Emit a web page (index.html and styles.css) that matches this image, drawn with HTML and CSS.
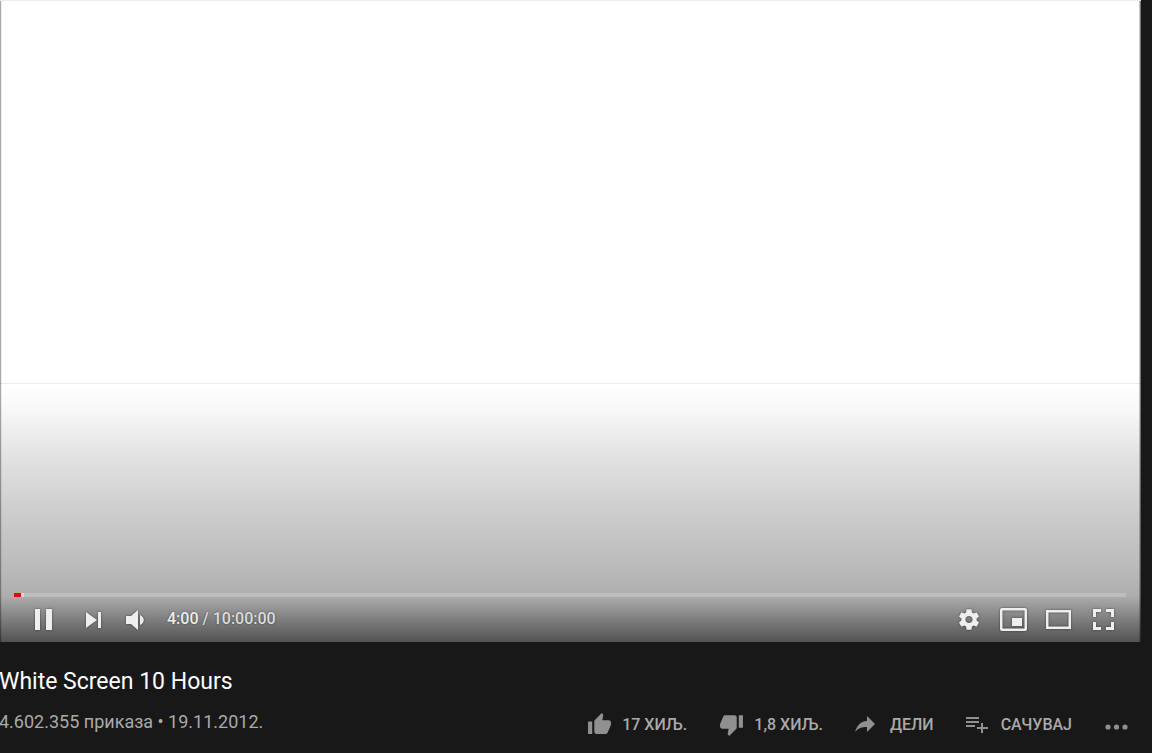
FILE: index.html
```html
<!DOCTYPE html>
<html lang="sr">
<head>
<meta charset="utf-8">
<meta name="viewport" content="width=device-width, initial-scale=1">
<title>White Screen 10 Hours</title>
<link rel="stylesheet" href="styles.css">
</head>
<body>
<main class="watch">
  <section class="player" aria-label="Видео плејер">
    <div class="chrome">
      <div class="progress" role="progressbar" aria-label="Напредак" aria-valuemin="0" aria-valuemax="36000" aria-valuenow="240">
        <span class="played"></span><span class="buffered"></span>
      </div>
      <div class="controls">
        <button class="control pause" aria-label="Паузирај"><svg width="17" height="21" viewBox="0 0 17 21"><path d="M0 0h5v21H0zM11 0h6v21h-6z"/></svg></button>
        <button class="control" aria-label="Следећи"><svg width="15" height="16" viewBox="0 0 15 16"><path d="M0 0l11 8-11 8zM12 0h3v16h-3z"/></svg></button>
        <button class="control" aria-label="Звук"><svg width="18" height="20" viewBox="0 0 18 20"><path d="M0 6h5l7-6v20l-7-6H0zM14 5c5 2 5 8 0 10z"/></svg></button>
        <div class="time"><span class="current">4:00</span> / 10:00:00</div>
        <button class="control wide" aria-label="Подешавања"><svg width="20" height="21" viewBox="2.2 2 19.6 20"><path d="M19.43 12.98c.04-.32.07-.64.07-.98s-.03-.66-.07-.98l2.11-1.65c.19-.15.24-.42.12-.64l-2-3.46c-.12-.22-.39-.3-.61-.22l-2.49 1c-.52-.4-1.08-.73-1.69-.98l-.38-2.65C14.46 2.18 14.25 2 14 2h-4c-.25 0-.46.18-.49.42l-.38 2.65c-.61.25-1.17.59-1.69.98l-2.49-1c-.23-.09-.49 0-.61.22l-2 3.46c-.13.22-.07.49.12.64l2.11 1.65c-.04.32-.07.65-.07.98s.03.66.07.98l-2.11 1.65c-.19.15-.24.42-.12.64l2 3.46c.12.22.39.3.61.22l2.49-1c.52.4 1.08.73 1.69.98l.38 2.65c.03.24.24.42.49.42h4c.25 0 .46-.18.49-.42l.38-2.65c.61-.25 1.17-.59 1.69-.98l2.49 1c.23.09.49 0 .61-.22l2-3.46c.12-.22.07-.49-.12-.64l-2.11-1.65zM12 15.5c-1.93 0-3.500-1.570-3.500-3.500s1.570-3.500 3.500-3.500 3.500 1.570 3.500 3.500-1.570 3.500-3.500 3.500z"/></svg></button>
        <button class="control wide" aria-label="Мини-плејер"><svg width="27" height="23" viewBox="0 0 27 23"><path fill-rule="evenodd" d="M2 0h23q2 0 2 2v19q0 2-2 2H2q-2 0-2-2V2Q0 0 2 0zM2.500 2.500v18h22v-18zM12 10h10v8H12z"/></svg></button>
        <button class="control wide" aria-label="Биоскопски режим"><svg width="25" height="19" viewBox="0 0 25 19"><path fill-rule="evenodd" d="M0 0h25v19H0zM2.500 2.500v14h20v-14z"/></svg></button>
        <button class="control wide" aria-label="Цео екран"><svg width="21" height="21" viewBox="0 0 21 21"><path d="M0 0h8v3H3v5H0zM13 0h8v8h-3V3h-5zM0 13h3v5h5v3H0zM18 13h3v8h-8v-3h5z"/></svg></button>
      </div>
    </div>
  </section>
  <section class="info">
    <h1 class="title">White Screen 10 Hours</h1>
    <div class="details">
      <p class="meta">4.602.355 приказа • 19.11.2012.</p>
      <div class="actions">
        <button class="action"><svg width="25" height="25" viewBox="0 0 24 24"><path d="M1 21h4V9H1v12zm22-11c0-1.100-.9-2-2-2h-6.310l.95-4.570.03-.32c0-.41-.17-.79-.44-1.060L14.170 1 7.590 7.590C7.220 7.950 7 8.450 7 9v10c0 1.100.9 2 2 2h9c.83 0 1.540-.5 1.840-1.220l3.020-7.050c.09-.23.14-.47.14-.73v-2z"/></svg>17 ХИЉ.</button>
        <button class="action"><svg width="25" height="25" viewBox="0 0 24 24"><path d="M15 3H6c-.83 0-1.540.5-1.840 1.220l-3.020 7.050c-.09.23-.14.47-.14.73v2c0 1.100.9 2 2 2h6.310l-.95 4.570-.03.32c0 .41.17.79.44 1.060L9.830 23l6.590-6.590c.36-.36.58-.86.58-1.410V5c0-1.100-.9-2-2-2zm4 0v12h4V3h-4z"/></svg>1,8 ХИЉ.</button>
        <button class="action"><svg width="25" height="25" viewBox="0 0 25 25"><path d="M12 9V4l8 8-8 8v-5C7 15 3 16 0 20 2 14 5 9.500 12 9z"/></svg>ДЕЛИ</button>
        <button class="action"><svg width="25" height="25" viewBox="0 0 25 25"><path d="M0 5h13v2H0zM0 9h13v2H0zM0 13h9v2H0zM15 11h2v4h5v2h-5v4h-2v-4h-4v-2h4z"/></svg>САЧУВАЈ</button>
        <button class="action" aria-label="Још радњи"><svg width="25" height="25" viewBox="0 0 25 25"><circle cx="4" cy="15" r="2.600"/><circle cx="12.500" cy="15" r="2.600"/><circle cx="21" cy="15" r="2.600"/></svg></button>
      </div>
    </div>
  </section>
</main>
</body>
</html>
```
FILE: styles.css
```css
* {
  box-sizing: border-box;
}

body {
  margin: 0;
  background: #181818;
  color: #fff;
  font-family: Roboto, "Noto Sans", sans-serif;
}

button {
  padding: 0;
  border: 0;
  background: none;
  color: inherit;
  font: inherit;
  cursor: pointer;
}

svg {
  display: block;
  flex: none;
  fill: currentColor;
}

.watch {
  display: flex;
  flex-direction: column;
  min-height: 100vh;
}

.player {
  flex: 1;
  display: flex;
  flex-direction: column;
  justify-content: flex-end;
  margin-right: 11px;
  background: #fff;
  border-top: 1px solid #ececec;
  box-shadow: inset 1px 0 #a8a8a8, inset 2px 0 #eee, inset -1px 0 #777, inset -2px 0 #c8c8c8;
}

.chrome {
  display: flex;
  flex-direction: column;
  justify-content: flex-end;
  height: 259px;
  padding: 0 15px 0 14px;
  border-top: 1px solid rgba(0, 0, 0, 0.08);
  background: linear-gradient(rgba(0, 0, 0, 0) 0, rgba(0, 0, 0, 0.03) 28px, rgba(0, 0, 0, 0.11) 70px, rgba(0, 0, 0, 0.2) 130px, rgba(0, 0, 0, 0.28) 190px, rgba(0, 0, 0, 0.32) 212px, rgba(0, 0, 0, 0.5) 235px, rgba(0, 0, 0, 0.68) 258px) no-repeat;
}

.progress {
  display: flex;
  height: 4px;
  background: rgba(255, 255, 255, 0.2);
}

.played {
  width: 7px;
  background: #e80808;
}

.buffered {
  width: 3px;
  background: rgba(255, 255, 255, 0.4);
}

.controls {
  display: flex;
  align-items: center;
  height: 45px;
  color: #eee;
}

.control {
  display: flex;
  align-items: center;
  justify-content: center;
  width: 41px;
  height: 45px;
}

.control svg {
  filter: drop-shadow(0 0 1px rgba(0, 0, 0, 0.5));
}

.pause {
  width: 59px;
}

.wide {
  width: 45px;
}

.time {
  margin: 0 auto 2px 12px;
  color: #ddd;
  font-size: 16px;
  font-weight: 500;
  line-height: 20px;
  text-shadow: 0 0 2px rgba(0, 0, 0, 0.5);
}

.current {
  color: #eee;
}

.info {
  padding: 26px 23px 12px 0;
}

.title {
  margin: 0 0 11px -1px;
  font-size: 23px;
  font-weight: 400;
  line-height: 28px;
}

.details {
  display: flex;
  justify-content: space-between;
  align-items: flex-start;
}

.meta {
  margin: 0 0 0 -1px;
  color: #aaa;
  font-size: 18px;
  line-height: 30px;
}

.actions {
  display: flex;
  align-items: center;
  gap: 32px;
  padding-top: 1px;
  height: 34px;
}

.action {
  display: flex;
  align-items: center;
  gap: 10px;
  color: #aaa;
  font-size: 16px;
  font-weight: 500;
  line-height: 25px;
}

.action svg {
  color: #909090;
}
```
